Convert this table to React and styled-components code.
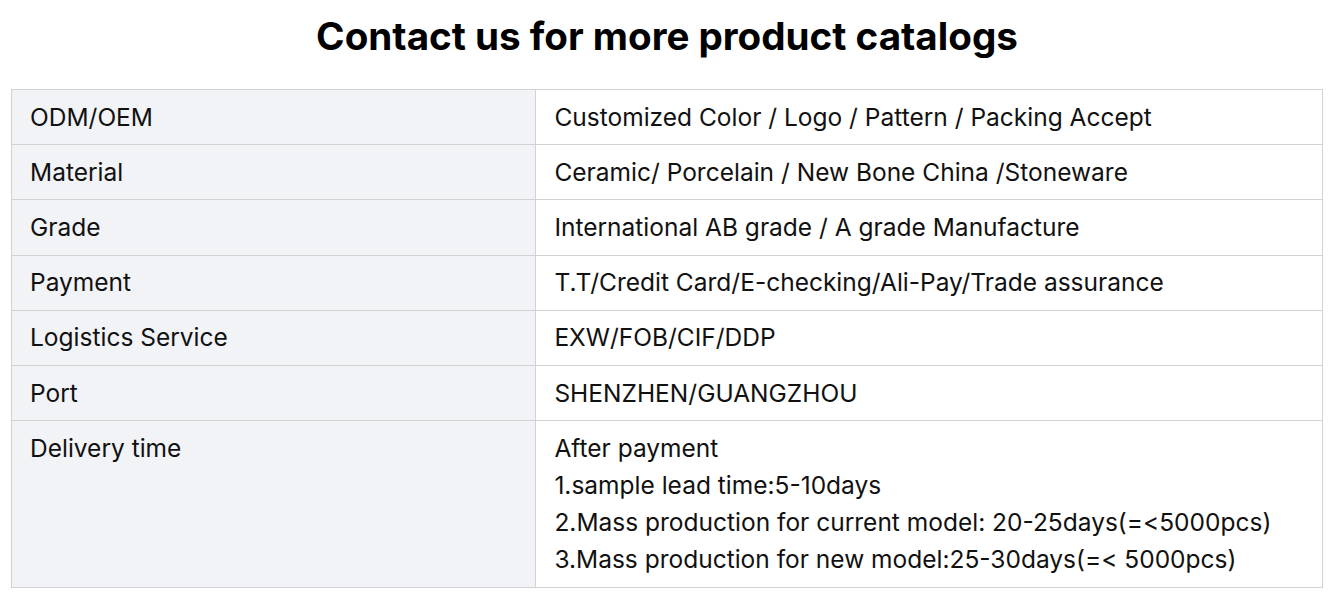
import React from "react";
import styled, { createGlobalStyle } from "styled-components";

const GlobalStyle = createGlobalStyle`
  body {
    margin: 0;
    background: #fff;
    font-family: Inter, "Noto Sans", sans-serif;
    color: #111;
  }
`;

const rows = [
  ["ODM/OEM", ["Customized Color / Logo / Pattern / Packing Accept"]],
  ["Material", ["Ceramic/ Porcelain / New Bone China /Stoneware"]],
  ["Grade", ["International AB grade / A grade Manufacture"]],
  ["Payment", ["T.T/Credit Card/E-checking/Ali-Pay/Trade assurance"]],
  ["Logistics Service", ["EXW/FOB/CIF/DDP"]],
  ["Port", ["SHENZHEN/GUANGZHOU"]],
  [
    "Delivery time",
    [
      "After payment",
      "1.sample lead time:5-10days",
      "2.Mass production for current model: 20-25days(=<5000pcs)",
      "3.Mass production for new model:25-30days(=< 5000pcs)",
    ],
  ],
];

const App = () => {
  return (
    <Page>
      <GlobalStyle />
      <Title>Contact us for more product catalogs</Title>
      <Table>
        <tbody>
          {rows.map(([label, lines], index) => (
            <tr key={index}>
              <Label>{label}</Label>
              <Value>
                {lines.map((line, i) => (
                  <div key={i}>{line}</div>
                ))}
              </Value>
            </tr>
          ))}
        </tbody>
      </Table>
    </Page>
  );
};

export default App;

const Page = styled.div`
  padding: 0 10px 0 11px;
`;

const Title = styled.h2`
  margin: 0;
  padding: 11px 0 0;
  height: 89px;
  box-sizing: border-box;
  text-align: center;
  font-size: 38.6px;
  font-weight: 700;
  line-height: 50px;
  color: #000;
`;

const Table = styled.table`
  width: 100%;
  border-collapse: collapse;
  font-size: 24.5px;
  line-height: 37.2px;

  td {
    border: 1px solid #d2d2d2;
    padding: 8.5px 18px;
    vertical-align: top;
  }
`;

const Label = styled.td`
  width: 40%;
  background: #f2f3f7;
`;

const Value = styled.td`
  background: #fff;
`;
